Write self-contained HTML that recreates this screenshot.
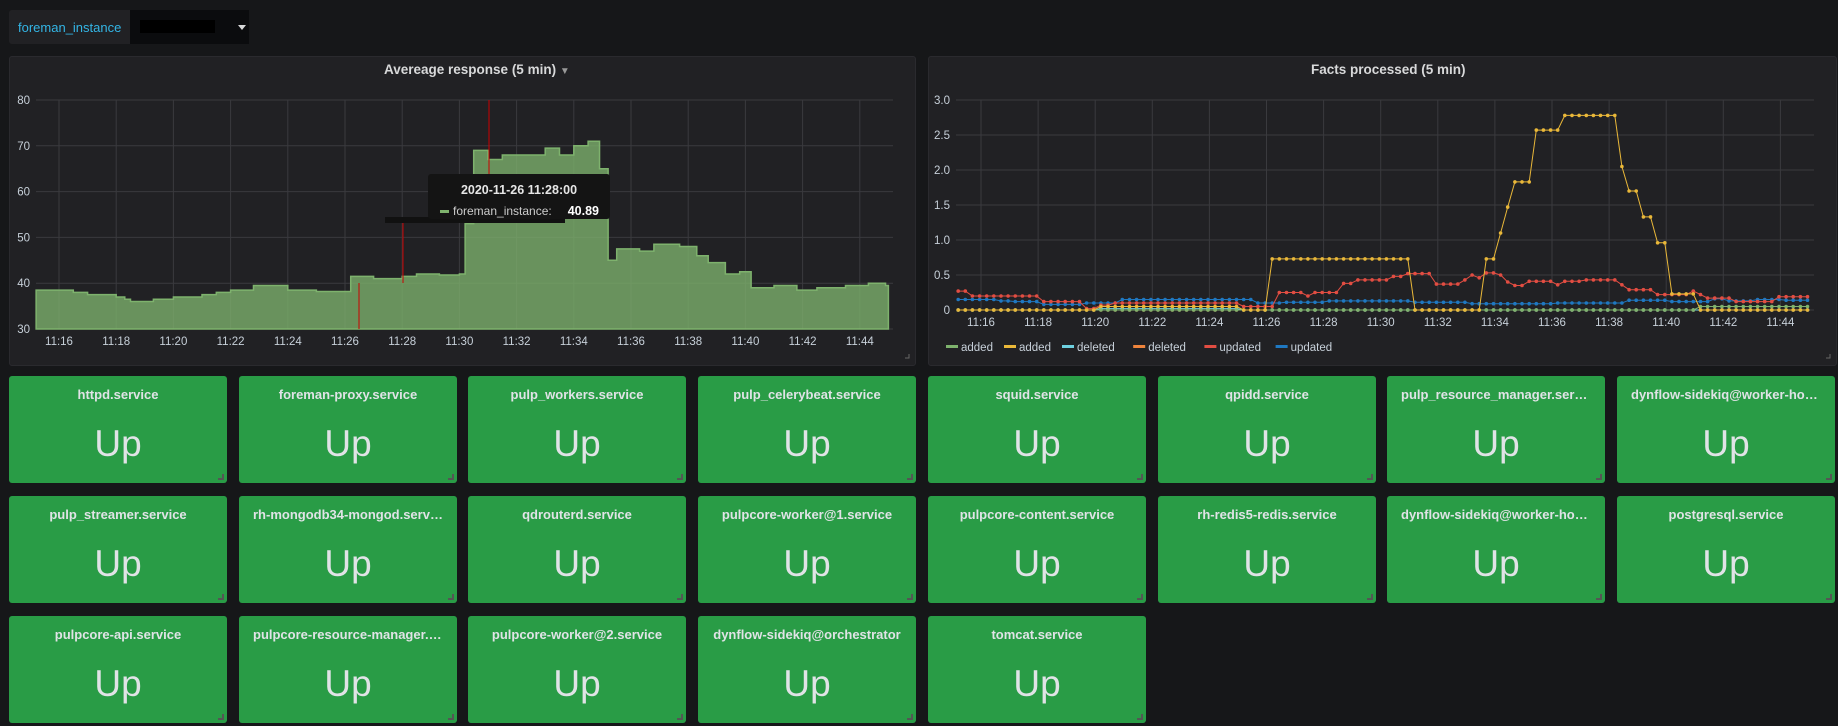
<!DOCTYPE html>
<html><head><meta charset="utf-8"><style>
body{margin:0;background:#161719;width:1838px;height:726px;overflow:hidden;font-family:"Liberation Sans",sans-serif;position:relative}
.var{position:absolute;left:9px;top:10px;width:231px;height:34px;background:#212124;border-radius:3px}
.var .l{position:absolute;left:9px;top:10px;color:#33b5e5;font-size:13px}
.var .d{position:absolute;left:121px;top:0;width:119px;height:34px;background:#0b0c0e}
.var .d i{position:absolute;left:10px;top:10px;width:75px;height:13px;background:#000}
.var .d b{position:absolute;left:108px;top:15px;border:4px solid transparent;border-top:5px solid #d8d9da;border-bottom:0}
.panel{position:absolute;top:56px;height:308px;background:#212124;border:1px solid #2a2a2e;border-radius:3px}
.title{position:absolute;top:62px;color:#d8d9da;font-size:13.5px;font-weight:bold}
.tile{position:absolute;width:218px;height:107px;background:#299c46;border-radius:3px}
.tile .n{position:absolute;left:14px;right:14px;top:11px;text-align:center;color:#e0e3e6;font-size:13px;font-weight:bold;white-space:nowrap;overflow:hidden;text-overflow:ellipsis}
.tile .u{position:absolute;left:0;right:0;top:47px;text-align:center;color:#e0e3e6;font-size:37px}
.tile:after{content:"";position:absolute;right:3px;bottom:3px;width:4px;height:4px;border-right:2px solid #555;border-bottom:2px solid #555}
svg{position:absolute;left:0;top:0}
svg text{font-family:"Liberation Sans",sans-serif;font-size:11.5px;fill:#c7d0d9}
</style></head><body>
<div class="var"><span class="l">foreman_instance</span><div class="d"><i></i><b></b></div></div>
<div class="panel" style="left:9px;width:905px"></div>
<div class="panel" style="left:928px;width:907px"></div>
<div class="title" style="left:384px">Avereage response (5 min) <span style="color:#999;font-size:10px">▼</span></div>
<div class="title" style="left:1311px">Facts processed (5 min)</div>
<svg id="s" width="1838" height="726"></svg>
<div id="tiles"></div>
<script>
var S='',i;
function lx(t){return 59+t*28.6}function ly(v){return 329-(v-30)*4.58}
for(i=30;i<=80;i+=10){var y=ly(i);S+='<line x1="36" x2="893" y1="'+y+'" y2="'+y+'" stroke="#3a3a3e"/><text x="30" y="'+(y+4)+'" text-anchor="end">'+i+'</text>';}
for(i=0;i<=28;i+=2){var x=lx(i);S+='<line x1="'+x+'" x2="'+x+'" y1="100" y2="329" stroke="#3a3a3e"/><text x="'+x+'" y="345" text-anchor="middle">11:'+(16+i)+'</text>';}
var L=[[-0.8,38.5],[0.5,38],[1,37.5],[2,37],[2.3,36.5],[2.5,36],[3.3,36.5],[4,37],[5,37.5],[5.5,38],[6,38.5],[6.8,39.5],[8,38.5],[9,38.2],[10.2,41.5],[11,41],[12,41.5],[12.5,42],[13.3,41.8],[14,42],[14.2,53],[14.5,69],[15,67],[15.5,68],[17,69.5],[17.5,68],[18,70],[18.5,71],[18.9,65],[19.2,45],[19.5,47.5],[20.3,47],[20.8,48.5],[21.7,48],[22.3,46],[22.7,44.5],[23.3,42],[23.8,42.5],[24.2,39],[25,39.5],[25.8,38.5],[26.5,39],[27.5,39.5],[28.3,40],[28.9,39.5]];
var p='M'+lx(-0.8)+' 329';for(i=0;i<L.length;i++){var x0=lx(L[i][0]),x1=i+1<L.length?lx(L[i+1][0]):lx(29);p+=' L'+x0+' '+ly(L[i][1])+' L'+x1+' '+ly(L[i][1]);}
p+=' L'+lx(29)+' 329Z';
S+='<path d="'+p+'" fill="#7eb26d" fill-opacity="0.78" stroke="#7eb26d" stroke-width="1.5"/>';
S+='<line x1="359" x2="359" y1="283" y2="329" stroke="#c00"/><line x1="403" x2="403" y1="222" y2="283" stroke="#c00"/><line x1="489" x2="489" y1="100" y2="174" stroke="#c00"/>';
S+='<rect x="385" y="217" width="180" height="6" fill="#111"/><rect x="428" y="174" width="182" height="45" rx="3" fill="#141414"/>';
S+='<text x="519" y="194" text-anchor="middle" style="font-weight:bold;font-size:12.5px;fill:#e6e6e6">2020-11-26 11:28:00</text>';
S+='<rect x="440" y="210" width="9" height="3" fill="#7eb26d"/><text x="453" y="215" style="font-size:12px;fill:#ccc">foreman_instance:</text><text x="599" y="215" text-anchor="end" style="font-weight:bold;font-size:12.5px;fill:#fff">40.89</text>';
S+='<path d="M905 358h4v-4" stroke="#666" fill="none"/><path d="M1826 358h4v-4" stroke="#666" fill="none"/>';
function rx(t){return 981+t*28.55}function ry(v){return 310-v*70}
for(i=0;i<=6;i++){var v=i*0.5,y=ry(v);S+='<line x1="956" x2="1814" y1="'+y+'" y2="'+y+'" stroke="#3a3a3e"/><text x="950" y="'+(y+4)+'" text-anchor="end">'+(i?v.toFixed(1):'0')+'</text>';}
for(i=0;i<=28;i+=2){var x=rx(i);S+='<line x1="'+x+'" x2="'+x+'" y1="100" y2="310" stroke="#3a3a3e"/><text x="'+x+'" y="326" text-anchor="middle">11:'+(16+i)+'</text>';}
function step(a,t){var v=a[0][1];for(var k=0;k<a.length;k++)if(t>=a[k][0]-0.01)v=a[k][1];return v}
var ser=[
['#ef843c',[[-1,0]]],
['#6ed0e0',[[-1,0],[4,0.02],[9,0]]],
['#7eb26d',[[-1,0],[25.2,0.05]]],
['#1f78c1',[[-1,0.15],[0.5,0.13],[1,0.12],[2,0.08],[3.5,0.1],[4.8,0.15],[9.5,0.1],[10.5,0.11],[12,0.13],[15,0.11],[17,0.09],[20,0.1],[22.5,0.14],[24,0.12],[25.5,0.16],[26,0.13],[27,0.15],[28,0.14]]],
['#e24d42',[[-1,0.27],[-0.3,0.2],[2.2,0.12],[3.5,0.02],[4,0.07],[4.5,0.1],[9,0.05],[10.3,0.25],[11.3,0.2],[11.5,0.25],[12.6,0.38],[13,0.43],[14.3,0.48],[14.8,0.52],[15.8,0.37],[16.8,0.43],[17.1,0.5],[17.4,0.46],[17.7,0.53],[18,0.5],[18.3,0.4],[18.6,0.35],[19.1,0.41],[20.1,0.36],[20.4,0.41],[21.1,0.43],[22.4,0.36],[22.7,0.29],[23.7,0.22],[24.9,0.27],[25.2,0.22],[25.4,0.17],[26.4,0.12],[27.8,0.19],[30.4,0.3],[31.3,0.22]]],
['#eab839',[[-1,0],[4,0.05],[9,0],[10.2,0.73],[15,0],[17.7,0.73],[18,1.1],[18.45,1.47],[18.7,1.83],[19.4,2.57],[20.4,2.78],[22.4,2.05],[22.7,1.7],[23.2,1.33],[23.5,0.96],[24.2,0.23],[25.2,0]]]];
ser.forEach(function(s){var pts=[],d='';for(var t=-0.8;t<=28.95;t+=0.25){pts.push([rx(t),ry(step(s[1],t))]);}
pts.forEach(function(q,k){d+=(k?'L':'M')+q[0].toFixed(1)+' '+q[1].toFixed(1)});
S+='<path d="'+d+'" fill="none" stroke="'+s[0]+'" stroke-width="1"/>';
pts.forEach(function(q){S+='<circle cx="'+q[0].toFixed(1)+'" cy="'+q[1].toFixed(1)+'" r="1.8" fill="'+s[0]+'"/>'});});
var lg=[['#7eb26d','added'],['#eab839','added'],['#6ed0e0','deleted'],['#ef843c','deleted'],['#e24d42','updated'],['#1f78c1','updated']],lxp=946;
lg.forEach(function(g){S+='<rect x="'+lxp+'" y="345" width="12" height="3" fill="'+g[0]+'"/><text x="'+(lxp+15)+'" y="351">'+g[1]+'</text>';lxp+=15+g[1].length*6.6+10;});
document.getElementById('s').innerHTML=S;
var names=["httpd.service","foreman-proxy.service","pulp_workers.service","pulp_celerybeat.service","squid.service","qpidd.service","pulp_resource_manager.service","dynflow-sidekiq@worker-hosts","pulp_streamer.service","rh-mongodb34-mongod.service","qdrouterd.service","pulpcore-worker@1.service","pulpcore-content.service","rh-redis5-redis.service","dynflow-sidekiq@worker-hosts","postgresql.service","pulpcore-api.service","pulpcore-resource-manager.service","pulpcore-worker@2.service","dynflow-sidekiq@orchestrator","tomcat.service"];
var h='';names.forEach(function(n,k){var c=k%8,r=Math.floor(k/8);h+='<div class="tile" style="left:'+Math.round(9+c*229.7)+'px;top:'+(376+r*120)+'px"><div class="n">'+n+'</div><div class="u">Up</div></div>'});
document.getElementById('tiles').innerHTML=h;
</script>
</body></html>
